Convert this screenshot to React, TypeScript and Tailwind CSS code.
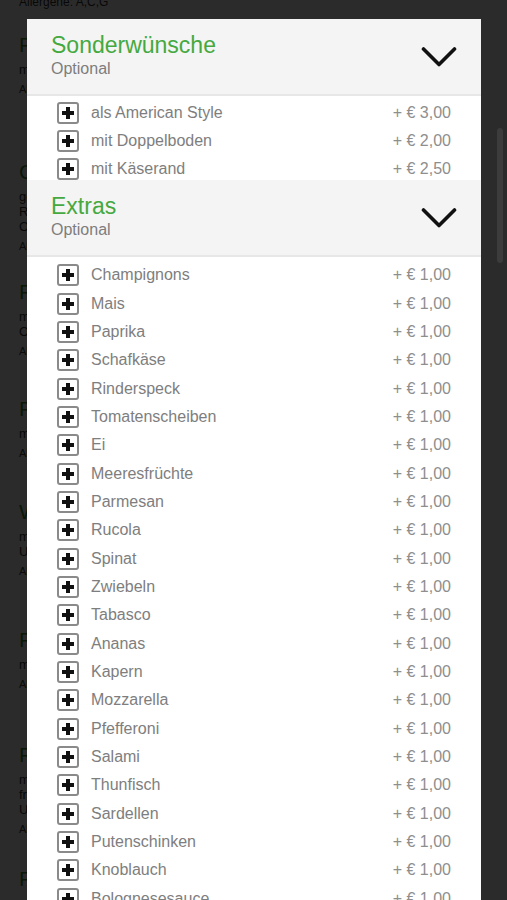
import React from "react";

const sonderwuensche = [
  { name: "als American Style", price: "3,00" },
  { name: "mit Doppelboden", price: "2,00" },
  { name: "mit Käserand", price: "2,50" },
];

const extras = [
  "Champignons",
  "Mais",
  "Paprika",
  "Schafkäse",
  "Rinderspeck",
  "Tomatenscheiben",
  "Ei",
  "Meeresfrüchte",
  "Parmesan",
  "Rucola",
  "Spinat",
  "Zwiebeln",
  "Tabasco",
  "Ananas",
  "Kapern",
  "Mozzarella",
  "Pfefferoni",
  "Salami",
  "Thunfisch",
  "Sardellen",
  "Putenschinken",
  "Knoblauch",
  "Bolognesesauce",
];

// menu behind the overlay, barely visible
const menu = [
  { title: "Pizza Funghi", lines: ["mit Tomatensauce, Käse und Champignons"], h: "h-[127px]" },
  { title: "Calzone", lines: ["gefüllt mit Schinken, Salami,", "Rinderspeck, Champignons", "Oregano und Käse"], h: "h-[120px]" },
  { title: "Pizza Hawaii", lines: ["mit Schinken und Ananas", "Oregano und Käse"], h: "h-[117px]" },
  { title: "Pizza Frutti di Mare", lines: ["mit Meeresfrüchten und Knoblauch"], h: "h-[103px]" },
  { title: "Wunschpizza", lines: ["mit 4 Zutaten nach Wahl", "Und Käse"], h: "h-[128px]" },
  { title: "Pizza Spinat", lines: ["mit Spinat, Knoblauch und Schafkäse"], h: "h-[115px]" },
  { title: "Pizza Bolognese", lines: ["mit Bolognesesauce,", "frischen Zwiebeln", "Und Käse"], h: "h-[124px]" },
  { title: "Pizza Tonno", lines: ["mit Thunfisch und Zwiebeln"], h: "h-[100px]" },
];

const PlusBox = () => (
  <svg width="22" height="22" viewBox="0 0 22 22" className="shrink-0">
    <rect x="1" y="1" width="20" height="20" rx="2" fill="#fff" stroke="#8a8a8a" strokeWidth="2" />
    <path d="M11 5v12M5 11h12" stroke="#111" strokeWidth="4" />
  </svg>
);

const Chevron = () => (
  <svg width="36" height="22" viewBox="0 0 36 22">
    <path d="M2.5 3L18 18.5 33.5 3" fill="none" stroke="#111" strokeWidth="3.6" strokeLinecap="round" strokeLinejoin="round" />
  </svg>
);

const GroupHeader = ({ title }: { title: string }) => (
  <div className="flex items-center justify-between h-[77px] pl-[24px] pr-[24px] bg-[#f4f4f4] border-b-2 border-[#e7e7e7]">
    <div className="mb-[3px]">
      <div className="text-[23px] leading-[1.15] text-[#45a940]">{title}</div>
      <div className="text-[16px] leading-[1.2] text-[#7d7d7d]">Optional</div>
    </div>
    <Chevron />
  </div>
);

const OptionRow = ({ name, price, h }: { name: string; price: string; h: string }) => (
  <div className={`flex items-center ${h} px-[30px]`}>
    <PlusBox />
    <span className="ml-[12px] text-[16px] text-[#7e7e7e]">{name}</span>
    <span className="ml-auto text-[16px] text-[#8e8e8e]">+ € {price}</span>
  </div>
);

export default function App() {
  return (
    <div className="relative h-[900px] w-full overflow-hidden bg-white font-['Liberation_Sans',Arial,sans-serif]">
      {/* page behind */}
      <div className="px-[19px]">
        <div className="-mt-[7px] h-[40px] text-[12px] text-[#333]">Allergene: A,C,G</div>
        {menu.map((m) => (
          <div key={m.title} className={m.h}>
            <div className="text-[21px] leading-[1.1] text-[#3a8f35]">{m.title}</div>
            <div className="mt-[6px] text-[13px] leading-[15px] text-[#333]">
              {m.lines.map((l) => (
                <div key={l}>{l}</div>
              ))}
            </div>
            <div className="mt-[4px] text-[11px] text-[#444]">Allergene: A,C,G</div>
          </div>
        ))}
      </div>

      {/* overlay */}
      <div className="absolute inset-0 bg-black/[0.83]">
        <div className="absolute right-[4px] top-[128px] h-[135px] w-[6px] rounded-full bg-[#3c3c3c]" />

        <div className="absolute left-[27px] top-[19px] w-[454px] bg-white">
          <GroupHeader title="Sonderwünsche" />
          <div className="h-[84px] overflow-hidden pt-[3px]">
            {sonderwuensche.map((o) => (
              <OptionRow key={o.name} name={o.name} price={o.price} h="h-[28px]" />
            ))}
          </div>

          <GroupHeader title="Extras" />
          <div className="pt-[4px]">
            {extras.map((e) => (
              <OptionRow key={e} name={e} price="1,00" h="h-[28.35px]" />
            ))}
          </div>
        </div>
      </div>
    </div>
  );
}
